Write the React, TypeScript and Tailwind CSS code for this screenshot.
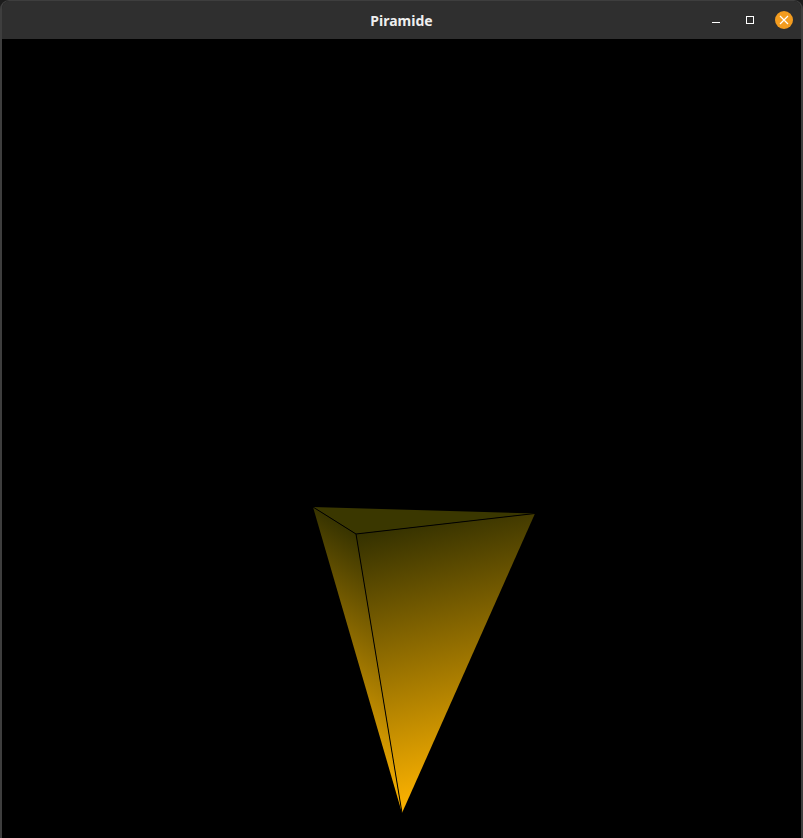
function Pyramid() {
  return (
    <svg viewBox="0 0 799 799" className="block w-full h-full">
      <defs>
        <linearGradient id="front" gradientUnits="userSpaceOnUse" x1="333.8" y1="500.9" x2="400" y2="774">
          <stop offset="0" stopColor="#343100" />
          <stop offset="1" stopColor="#ffb400" />
        </linearGradient>
        <linearGradient id="side" gradientUnits="userSpaceOnUse" x1="512" y1="594" x2="400" y2="774">
          <stop offset="0" stopColor="#383400" />
          <stop offset="1" stopColor="#ffb400" />
        </linearGradient>
      </defs>
      <polygon points="311,468 533,474.5 354,495" fill="#3a3700" />
      <polygon points="354,495 533,474.5 400,774" fill="url(#front)" />
      <polygon points="311,468 354,495 400,774" fill="url(#side)" />
      <path d="M311 468 L354 495 L533 474.5 M354 495 L400 774" fill="none" stroke="#000" strokeWidth="1" />
    </svg>
  );
}

export default function App() {
  return (
    <div className="w-[803px] h-[838px] overflow-hidden bg-[#1c1c1c] font-['Noto_Sans',sans-serif]">
      <div className="h-full flex flex-col rounded-t-[9px] border-x-2 border-t border-[#3e3e3e] overflow-hidden">
        <header className="relative h-[38px] shrink-0 flex items-center justify-center bg-[#2f2f2f]">
          <span className="text-[14px] font-bold text-[#eeeeee]">Piramide</span>
          <div className="absolute right-0 top-0 h-full">
            <div className="h-full flex items-center">
              <span className="w-[8px] h-px bg-white mr-[26px] mt-[5px]" />
              <span className="w-[8px] h-[8px] border border-white mr-[21px]" />
              <span className="w-[18px] h-[18px] rounded-full bg-[#f39c1f] flex items-center justify-center mr-[8px]">
                <svg viewBox="0 0 10 10" className="w-[10px] h-[10px]">
                  <path d="M1 1 L9 9 M9 1 L1 9" stroke="#fff" strokeWidth="1.2" fill="none" />
                </svg>
              </span>
            </div>
          </div>
        </header>
        <main className="flex-1 bg-black">
          <Pyramid />
        </main>
      </div>
    </div>
  );
}
